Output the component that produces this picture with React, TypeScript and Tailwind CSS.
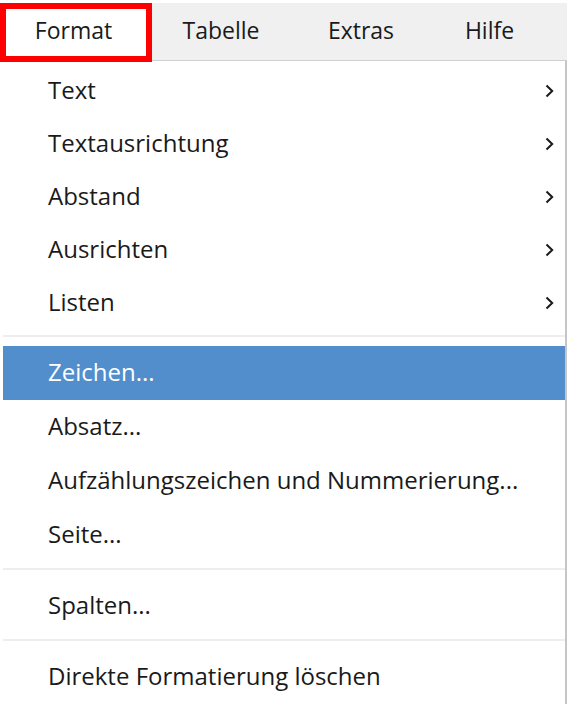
import React from 'react';

type Item = { label: string; sub?: boolean; active?: boolean };

const groups: { h: string; items: Item[] }[] = [
  {
    h: 'h-[53px]',
    items: [
      { label: 'Text', sub: true },
      { label: 'Textausrichtung', sub: true },
      { label: 'Abstand', sub: true },
      { label: 'Ausrichten', sub: true },
      { label: 'Listen', sub: true },
    ],
  },
  {
    h: 'h-[54px]',
    items: [
      { label: 'Zeichen...', active: true },
      { label: 'Absatz...' },
      { label: 'Aufzählungszeichen und Nummerierung...' },
      { label: 'Seite...' },
    ],
  },
  { h: 'h-[54px]', items: [{ label: 'Spalten...' }] },
  { h: 'h-[54px]', items: [{ label: 'Direkte Formatierung löschen' }] },
];

const Chevron = () => (
  <svg width="9" height="14" viewBox="0 0 9 14" className="shrink-0">
    <path d="M1.5 1.5 L7.2 7 L1.5 12.5" fill="none" stroke="#1a1a1a" strokeWidth="2" />
  </svg>
);

export default function App() {
  return (
    <div className="w-[567px] h-[704px] bg-white overflow-hidden font-['Open_Sans',sans-serif] text-[#1a1a1a]">
      {/* menu bar */}
      <div className="pt-[3px]">
        <div className="flex items-start h-[57px] bg-[#f0f0f0] text-[23px]">
          <div className="relative z-10 w-[152px] h-[59px] border-[6px] border-[#ff0000] bg-white flex items-center justify-center pr-[5px] pb-[4px]">
            Format
          </div>
          <div className="w-[138px] h-full flex items-center justify-center pb-[3px]">Tabelle</div>
          <div className="w-[142px] h-full flex items-center justify-center pb-[3px]">Extras</div>
          <div className="w-[115px] h-full flex items-center justify-center pb-[3px]">Hilfe</div>
        </div>
      </div>

      {/* dropdown */}
      <div className="ml-[3px] border-t border-t-[#cfcfcf] border-r-2 border-r-[#c6c6c6] pt-[3px] text-[24px]">
        {groups.map((g, gi) => (
          <div key={gi}>
            {gi > 0 && (
              <div className="pt-[6px] pb-[9px]">
                <div className="h-[2px] bg-[#eeeeee]" />
              </div>
            )}
            {g.items.map((it) => (
              <div
                key={it.label}
                className={`${g.h} flex items-center pl-[45px] pr-[11px] ${
                  it.active ? 'bg-[#528ecc] text-white' : ''
                }`}
              >
                <span className="pb-[2px]">{it.label}</span>
                {it.sub && (
                  <span className="ml-auto">
                    <Chevron />
                  </span>
                )}
              </div>
            ))}
          </div>
        ))}
      </div>
    </div>
  );
}
